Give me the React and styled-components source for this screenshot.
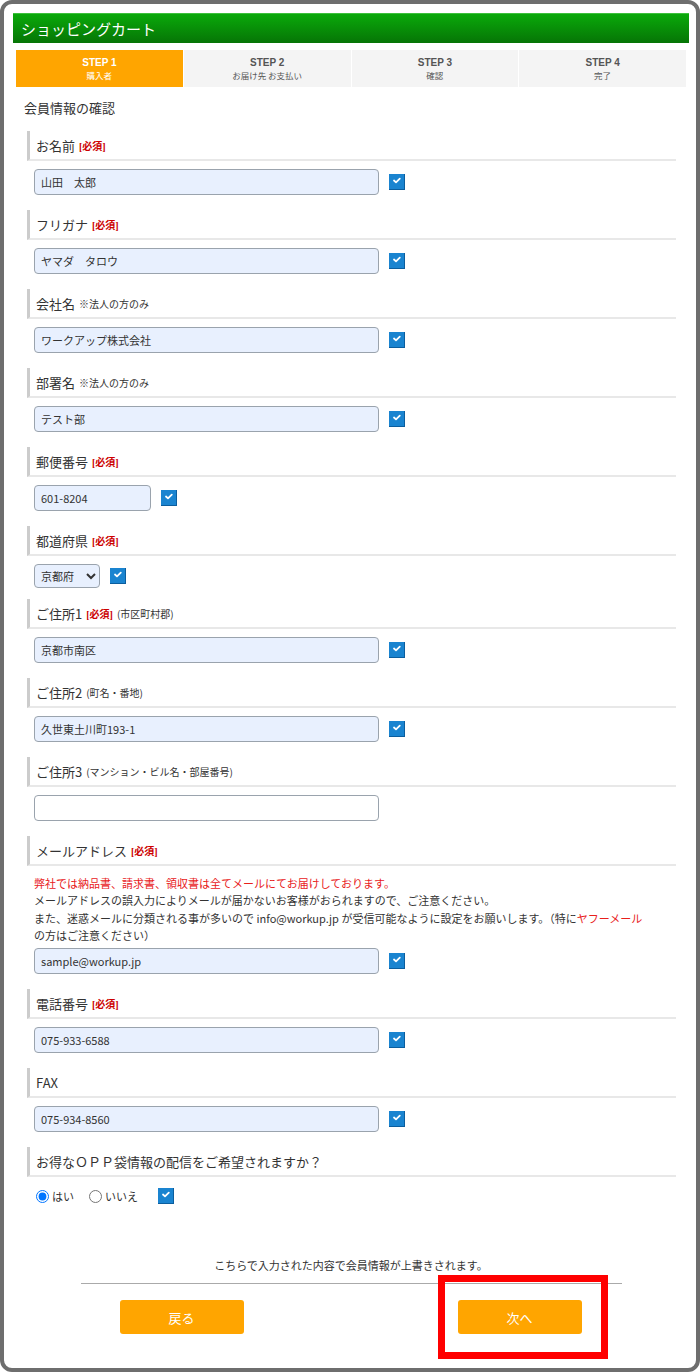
import React from "react";
import styled, { createGlobalStyle } from "styled-components";

const Global = createGlobalStyle`
  html, body { margin: 0; padding: 0; background: #fff; }
  body { font-family: "Noto Sans CJK JP", "Noto Sans", sans-serif; color: #333; }
`;

const Frame = styled.div`
  position: relative;
  box-sizing: border-box;
  width: 700px;
  height: 1372px;
  border: 4px solid #6e6e6e;
  border-radius: 12px;
  padding: 9px 7px 0 9px;
  background: #fff;
`;

const Header = styled.div`
  height: 30px;
  display: flex;
  align-items: center;
  padding-left: 8px;
  color: #fff;
  font-size: 15px;
  background: linear-gradient(#0aa90a, #067506);
  border-top: 1px solid #3cc03c;
  box-sizing: border-box;
`;

const Steps = styled.div`
  display: grid;
  grid-template-columns: repeat(4, 1fr);
  gap: 1px;
  margin: 7px 3px 0;
  height: 37px;
`;

const Step = styled.div`
  display: flex;
  flex-direction: column;
  align-items: center;
  justify-content: center;
  gap: 1px;
  background: ${(p) => (p.$active ? "#ffa500" : "#f4f4f4")};
  color: ${(p) => (p.$active ? "#fff" : "#555")};
`;

const StepNo = styled.div`
  font-family: "Liberation Sans", Arial, sans-serif;
  font-weight: bold;
  font-size: 10px;
  line-height: 12px;
`;

const StepName = styled.div`
  font-size: 8.5px;
  line-height: 11px;
`;

const Content = styled.div`
  padding: 0 13px 0 14px;
`;

const Title = styled.div`
  margin: 12px 0 0 -3px;
  font-size: 13px;
  line-height: 18px;
  color: #333;
`;

const Section = styled.div`
  margin-top: ${(p) => p.$top || 15}px;
`;

const Heading = styled.div`
  box-sizing: border-box;
  height: 30px;
  display: flex;
  align-items: center;
  padding-left: 6px;
  border-left: 3px solid #cccccc;
  border-bottom: 2px solid #e8e8e8;
  font-size: 13px;
  color: #333;
  gap: 4px;
`;

const Required = styled.span`
  color: #c00;
  font-weight: bold;
  font-size: 10px;
  font-family: "Liberation Serif", "Noto Sans CJK JP", serif;
`;

const Hint = styled.span`
  font-size: 10px;
  color: #333;
`;

const Row = styled.div`
  display: flex;
  align-items: center;
  gap: 10px;
  margin-top: ${(p) => p.$top ?? 8}px;
  padding-left: 7px;
`;

const TextInput = styled.input`
  box-sizing: border-box;
  width: ${(p) => p.$w || 345}px;
  height: 26px;
  padding: 0 6px;
  border: 1px solid #9aa3ad;
  border-radius: 4px;
  background: ${(p) => (p.$empty ? "#fff" : "#e8f0fe")};
  font-family: "Noto Sans CJK JP", sans-serif;
  font-size: 11px;
  color: #333;
  outline: none;
`;

const Select = styled.select`
  box-sizing: border-box;
  width: 66px;
  height: 24px;
  padding: 0 2px;
  border: 1px solid #9aa3ad;
  border-radius: 4px;
  background: #e8f0fe;
  font-family: "Noto Sans CJK JP", sans-serif;
  font-size: 11px;
  color: #333;
`;

const Notes = styled.div`
  margin-top: 9px;
  padding-left: 7px;
  font-size: 11px;
  line-height: 17.3px;
  color: #333;
  white-space: nowrap;
`;

const Red = styled.span`
  color: #e8201b;
`;

const RadioRow = styled.div`
  display: flex;
  align-items: center;
  margin-top: 10px;
  padding-left: 7px;
  font-size: 11px;
  height: 18px;
`;

const RadioLabel = styled.label`
  display: flex;
  align-items: center;
  gap: 1px;
  margin-right: ${(p) => p.$mr || 10}px;
`;

const Radio = styled.input`
  margin: 0 2px 0 2px;
  width: 13px;
  height: 13px;
`;

const Footer = styled.div`
  width: 541px;
  margin: 52px auto 0;
`;

const FooterNote = styled.div`
  text-align: center;
  font-size: 11px;
  line-height: 16px;
  padding-bottom: 10px;
  border-bottom: 1px solid #aaaaaa;
`;

const Buttons = styled.div`
  display: flex;
  justify-content: space-between;
  padding: 16px 40px 0 39px;
`;

const Button = styled.button`
  width: 124px;
  height: 34px;
  border: none;
  border-radius: 3px;
  background: #ffa500;
  color: #fff;
  font-family: "Noto Sans CJK JP", sans-serif;
  font-size: 13px;
`;

const Highlight = styled.div`
  position: absolute;
  left: 434px;
  top: 1271px;
  width: 170px;
  height: 84px;
  box-sizing: border-box;
  border: 7px solid #ff0000;
  pointer-events: none;
`;

const Check = () => (
  <svg width="16" height="16" viewBox="0 0 16 16">
    <rect x="0" y="0" width="16" height="16" fill="#1a84d0" />
    <rect x="0" y="15" width="16" height="1" fill="#0b5e9e" />
    <rect x="15" y="0" width="1" height="16" fill="#0b5e9e" />
    <path d="M5 6.5 L7 8.3 L10.8 4.6" fill="none" stroke="#fff" strokeWidth="1.8" strokeLinecap="round" strokeLinejoin="round" />
  </svg>
);

const fields = [
  { label: "お名前", req: true, value: "山田　太郎", top: 14 },
  { label: "フリガナ", req: true, value: "ヤマダ　タロウ" },
  { label: "会社名", hint: "※法人の方のみ", value: "ワークアップ株式会社" },
  { label: "部署名", hint: "※法人の方のみ", value: "テスト部" },
  { label: "郵便番号", req: true, value: "601-8204", w: 117 },
  { label: "都道府県", req: true, select: true },
  { label: "ご住所1", req: true, hint: "(市区町村郡)", value: "京都市南区", top: 11 },
  { label: "ご住所2", hint: "(町名・番地)", value: "久世東土川町193-1" },
  { label: "ご住所3", hint: "(マンション・ビル名・部屋番号)", value: "" },
];

const fields2 = [
  { label: "電話番号", req: true, value: "075-933-6588" },
  { label: "FAX", value: "075-934-8560" },
];

const Field = ({ f }) => (
  <Section $top={f.top}>
    <Heading>
      {f.label}
      {f.req && <Required>[必須]</Required>}
      {f.hint && <Hint>{f.hint}</Hint>}
    </Heading>
    <Row>
      {f.select ? (
        <Select defaultValue="京都府">
          <option>京都府</option>
        </Select>
      ) : (
        <TextInput $w={f.w} $empty={!f.value} defaultValue={f.value} readOnly />
      )}
      {f.value !== "" && <Check />}
    </Row>
  </Section>
);

export default function App() {
  return (
    <>
      <Global />
      <Frame>
        <Header>ショッピングカート</Header>
        <Steps>
          <Step $active>
            <StepNo>STEP 1</StepNo>
            <StepName>購入者</StepName>
          </Step>
          <Step>
            <StepNo>STEP 2</StepNo>
            <StepName>お届け先 お支払い</StepName>
          </Step>
          <Step>
            <StepNo>STEP 3</StepNo>
            <StepName>確認</StepName>
          </Step>
          <Step>
            <StepNo>STEP 4</StepNo>
            <StepName>完了</StepName>
          </Step>
        </Steps>
        <Content>
          <Title>会員情報の確認</Title>
          {fields.map((f) => (
            <Field key={f.label} f={f} />
          ))}
          <Section>
            <Heading>
              メールアドレス<Required>[必須]</Required>
            </Heading>
            <Notes>
              <Red>弊社では納品書、請求書、領収書は全てメールにてお届けしております。</Red>
              <br />
              メールアドレスの誤入力によりメールが届かないお客様がおられますので、ご注意ください。
              <br />
              また、迷惑メールに分類される事が多いので info@workup.jp が受信可能なように設定をお願いします。（特に<Red>ヤフーメール</Red>
              <br />
              の方はご注意ください）
            </Notes>
            <Row $top={4}>
              <TextInput defaultValue="sample@workup.jp" readOnly />
              <Check />
            </Row>
          </Section>
          {fields2.map((f) => (
            <Field key={f.label} f={f} />
          ))}
          <Section>
            <Heading>お得なＯＰＰ袋情報の配信をご希望されますか？</Heading>
            <RadioRow>
              <RadioLabel $mr={13}>
                <Radio type="radio" name="opp" defaultChecked />
                はい
              </RadioLabel>
              <RadioLabel $mr={20}>
                <Radio type="radio" name="opp" />
                いいえ
              </RadioLabel>
              <Check />
            </RadioRow>
          </Section>
        </Content>
        <Footer>
          <FooterNote>こちらで入力された内容で会員情報が上書きされます。</FooterNote>
          <Buttons>
            <Button>戻る</Button>
            <Button>次へ</Button>
          </Buttons>
        </Footer>
        <Highlight />
      </Frame>
    </>
  );
}
